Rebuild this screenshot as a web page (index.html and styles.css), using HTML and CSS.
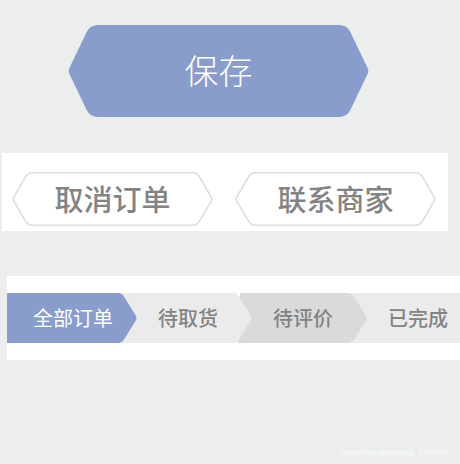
FILE: index.html
```html
<!DOCTYPE html>
<html lang="zh">
<head>
<meta charset="utf-8">
<link rel="stylesheet" href="styles.css">
</head>
<body>
<div class="save-row">
  <div class="hex save">
    <svg class="hex-bg" width="301" height="92" viewBox="0 0 301 92"><path d="M30,0 H271 Q279,0 282.45,7.2 L299.7,43.3 Q301,46 299.7,48.7 L282.45,84.8 Q279,92 271,92 H30 Q22,92 18.55,84.8 L1.3,48.7 Q0,46 1.3,43.3 L18.55,7.2 Q22,0 30,0 Z" fill="#889dcc"/></svg>
    <span class="hex-label">保存</span>
  </div>
</div>

<div class="band band-buttons">
  <div class="hex outline">
    <svg class="hex-bg" width="201" height="54" viewBox="0 0 201 54"><path d="M21,0.75 H180 Q185.5,0.75 187.9,5.6 L199.6,25.5 Q200.3,27 199.6,28.5 L187.9,48.4 Q185.5,53.25 180,53.25 H21 Q15.5,53.25 13.1,48.4 L1.4,28.5 Q0.7,27 1.4,25.5 L13.1,5.6 Q15.5,0.75 21,0.75 Z" fill="#fff" stroke="#dcdcdc" stroke-width="1.5"/></svg>
    <span class="hex-label">取消订单</span>
  </div>
  <div class="hex outline">
    <svg class="hex-bg" width="201" height="54" viewBox="0 0 201 54"><path d="M21,0.75 H180 Q185.5,0.75 187.9,5.6 L199.6,25.5 Q200.3,27 199.6,28.5 L187.9,48.4 Q185.5,53.25 180,53.25 H21 Q15.5,53.25 13.1,48.4 L1.4,28.5 Q0.7,27 1.4,25.5 L13.1,5.6 Q15.5,0.75 21,0.75 Z" fill="#fff" stroke="#dcdcdc" stroke-width="1.5"/></svg>
    <span class="hex-label">联系商家</span>
  </div>
</div>

<div class="band band-tabs">
  <div class="tabs">
    <div class="tab tab-1 active">
      <svg class="hex-bg" width="130" height="50" viewBox="0 0 130 50"><path d="M0,0 H111 Q115,0 117,3.4 L129,23 Q130,25 129,27 L117,46.6 Q115,50 111,50 H0 Z" fill="#889dcc"/></svg>
      <span class="tab-label">全部订单</span>
    </div>
    <div class="tab tab-2">
      <svg class="hex-bg" width="130" height="50" viewBox="0 0 130 50"><path d="M0,0 H111 Q115,0 117,3.4 L129,23 Q130,25 129,27 L117,46.6 Q115,50 111,50 H0 Z" fill="#ebebeb"/></svg>
      <span class="tab-label">待取货</span>
    </div>
    <div class="tab tab-3">
      <svg class="hex-bg" width="130" height="50" viewBox="0 0 130 50"><path d="M3,0 H111 Q115,0 117,3.4 L129,23 Q130,25 129,27 L117,46.6 Q115,50 111,50 H1 Z" fill="#dadada"/></svg>
      <span class="tab-label">待评价</span>
    </div>
    <div class="tab tab-4">
      <svg class="hex-bg" width="130" height="50" viewBox="0 0 130 50"><path d="M0,0 H111 Q115,0 117,3.4 L129,23 Q130,25 129,27 L117,46.6 Q115,50 111,50 H0 Z" fill="#ebebeb"/></svg>
      <span class="tab-label">已完成</span>
    </div>
  </div>
</div>

<div class="watermark">https://blog.csdn.net/qq_33463449</div>
</body>
</html>
```

FILE: styles.css
```css
* { box-sizing: border-box; }

html, body {
  margin: 0;
  padding: 0;
}

body {
  width: 460px;
  height: 464px;
  overflow: hidden;
  background: #eceeed;
  font-family: "Noto Sans CJK SC", "Noto Sans", "Liberation Sans", sans-serif;
}

.save-row {
  padding: 25px 0 0 68px;
}

.hex {
  display: grid;
  width: max-content;
  align-items: center;
  justify-items: center;
}

.hex-bg,
.hex-label,
.tab-label {
  grid-area: 1 / 1;
}

.hex-bg {
  display: block;
}

.save .hex-label {
  color: #ffffff;
  font-size: 34px;
  font-weight: 300;
  line-height: 1;
  padding-bottom: 2px;
}

.band {
  background: #ffffff;
}

.band-buttons {
  margin: 36px 12px 0 2px;
  height: 78px;
  padding: 13px 0 0 10px;
  display: flex;
  gap: 22px;
}

.outline .hex-label {
  color: #838383;
  font-size: 29px;
  font-weight: 500;
  line-height: 1;
  padding-bottom: 1px;
}

.band-tabs {
  margin: 45px 0 0 7px;
  height: 84px;
  padding-top: 17px;
  overflow: hidden;
}

.tabs {
  display: flex;
  height: 50px;
}

.tab {
  flex: 0 0 130px;
  width: 130px;
  height: 50px;
  display: grid;
  align-items: center;
  justify-items: center;
}

.tab + .tab {
  margin-left: -15px;
}

.tab-1 { z-index: 4; }
.tab-2 { z-index: 3; }
.tab-3 { z-index: 2; }
.tab-4 { z-index: 1; }

.tab-label {
  font-size: 20px;
  font-weight: 500;
  line-height: 1;
  color: #838383;
  padding-left: 2px;
}

.tab.active .tab-label {
  color: #ffffff;
  font-weight: 400;
}

.watermark {
  margin-top: 88px;
  padding-right: 11px;
  text-align: right;
  font-family: "Liberation Sans", sans-serif;
  font-size: 7px;
  line-height: 9px;
  color: rgba(255, 255, 255, 0.75);
}
```
